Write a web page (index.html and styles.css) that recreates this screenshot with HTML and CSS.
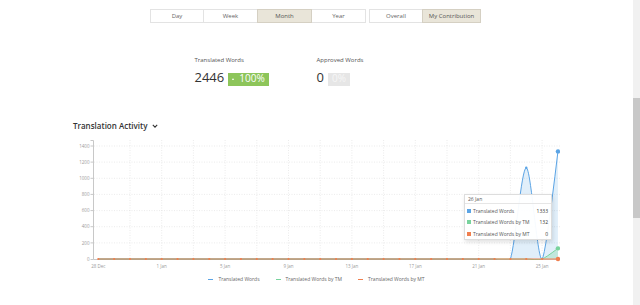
FILE: index.html
```html
<!DOCTYPE html>
<html lang="en">
<head>
    <meta charset="UTF-8">
    <meta name="viewport" content="width=device-width, initial-scale=1.0">
    <title>Translation Activity</title>
    <link rel="stylesheet" href="styles.css">
</head>
<body>
<div class="page">
    <main class="content">
        <div class="tabs">
            <div class="seg">
                <button class="tab">Day</button>
                <button class="tab">Week</button>
                <button class="tab active">Month</button>
                <button class="tab">Year</button>
            </div>
            <div class="seg">
                <button class="tab">Overall</button>
                <button class="tab wide active">My Contribution</button>
            </div>
        </div>

        <div class="stats">
            <div class="stat">
                <div class="stat-label">Translated Words</div>
                <div class="stat-row">
                    <span class="stat-num">2446</span>
                    <span class="badge badge-up"><span class="arrow"></span>100%</span>
                </div>
            </div>
            <div class="stat">
                <div class="stat-label">Approved Words</div>
                <div class="stat-row">
                    <span class="stat-num">0</span>
                    <span class="badge badge-none">0%</span>
                </div>
            </div>
        </div>

        <section class="activity">
            <h2 class="activity-title">Translation Activity
                <svg class="chevron" width="6" height="4" viewBox="0 0 6 4"><polyline points="0.8,0.8 3,3.1 5.2,0.8"/></svg>
            </h2>

            <div class="chart">
                <svg class="plot" width="487" height="135" viewBox="73 138 487 135">
                    <defs>
                        <clipPath id="plot-area"><rect x="93" y="138" width="470" height="122"/></clipPath>
                    </defs>

                    <!-- grid -->
                    <path class="grid" d="M94 242.9H560M94 226.7H560M94 210.6H560M94 194.4H560M94 178.3H560M94 162.1H560M94 146H560"/>
                    <path class="grid" d="M130 140V259M161.7 140V259M193.4 140V259M225.1 140V259M256.8 140V259M288.5 140V259M320.2 140V259M351.9 140V259M383.6 140V259M415.3 140V259M447 140V259M478.7 140V259M510.4 140V259M542.1 140V259"/>

                    <!-- axes -->
                    <path class="axis" d="M90.5 140.5H93.5V259.5H560.5V262M90.5 259.5H93.5M90.5 146H93.5M90.5 162.1H93.5M90.5 178.3H93.5M90.5 194.4H93.5M90.5 210.6H93.5M90.5 226.7H93.5M90.5 242.9H93.5"/>
                    <g class="ticks ylab">
                        <text x="89.5" y="260.6">0</text>
                        <text x="89.5" y="244.5">200</text>
                        <text x="89.5" y="228.3">400</text>
                        <text x="89.5" y="212.2">600</text>
                        <text x="89.5" y="196">800</text>
                        <text x="89.5" y="179.9">1000</text>
                        <text x="89.5" y="163.7">1200</text>
                        <text x="89.5" y="147.6">1400</text>
                    </g>
                    <g class="ticks xlab">
                        <text x="98.3" y="267.8">28 Dec</text>
                        <text x="161.7" y="267.8">1 Jan</text>
                        <text x="225.1" y="267.8">5 Jan</text>
                        <text x="288.5" y="267.8">9 Jan</text>
                        <text x="351.9" y="267.8">13 Jan</text>
                        <text x="415.3" y="267.8">17 Jan</text>
                        <text x="478.7" y="267.8">21 Jan</text>
                        <text x="542.1" y="267.8">25 Jan</text>
                    </g>

                    <!-- series -->
                    <g clip-path="url(#plot-area)">
                        <path class="area tw" d="M98.3,259 L494.55,259 C499.3,259 505.65,272.7 510.4,259 C515.15,245.3 521.55,167.8 526.25,167.8 C531.05,167.8 537.35,261.5 542.1,259 Q545.27,257.36 557.95,151.4 L557.95,259 Z"/>
                        <path class="area tm" d="M98.3,259 L526.25,259 C531.05,259 537.35,260.6 542.1,259 Q545.27,257.93 557.95,248.35 L557.95,259 Z"/>
                        <path class="line tw" d="M98.3,259 L494.55,259 C499.3,259 505.65,272.7 510.4,259 C515.15,245.3 521.55,167.8 526.25,167.8 C531.05,167.8 537.35,261.5 542.1,259 Q545.27,257.36 557.95,151.4"/>
                        <path class="line tm" d="M98.3,259 L526.25,259 C531.05,259 537.35,260.6 542.1,259 Q545.27,257.93 557.95,248.35"/>
                        <path class="line mt" d="M98.3,259 H557.95"/>
                    </g>

                    <!-- points -->
                    <circle class="dot tw" cx="526.25" cy="167.8" r="1.2"/>
                    <line class="dots mt" x1="98.3" y1="259" x2="542.2" y2="259"/>
                    <circle class="dot tw" cx="557.95" cy="151.4" r="2.2"/>
                    <circle class="dot tm" cx="557.95" cy="248.35" r="2.2"/>
                    <circle class="dot mt" cx="557.95" cy="259" r="2.2"/>
                </svg>

                <div class="tooltip">
                    <div class="tip-head">26 Jan</div>
                    <div class="tip-rows">
                        <div class="tip-row"><span class="swatch tw"></span>Translated Words<span class="tip-val">1333</span></div>
                        <div class="tip-row"><span class="swatch tm"></span>Translated Words by TM<span class="tip-val">132</span></div>
                        <div class="tip-row"><span class="swatch mt"></span>Translated Words by MT<span class="tip-val">0</span></div>
                    </div>
                </div>
            </div>

            <ul class="legend">
                <li><span class="legend-line tw"></span>Translated Words</li>
                <li><span class="legend-line tm"></span>Translated Words by TM</li>
                <li><span class="legend-line mt"></span>Translated Words by MT</li>
            </ul>
        </section>
    </main>

    <div class="scrollbar"><div class="thumb"></div></div>
</div>
</body>
</html>
```

FILE: styles.css
```css
body {
    font-family: "Open Sans", "Liberation Sans", sans-serif;
    margin: 0;
    padding: 0;
    background-color: #fff;
    color: #333;
    overflow: hidden;
}

.page {
    display: flex;
    height: 305px;
}

.content {
    flex: 1;
    min-width: 0;
}

/* period / scope switches */
.tabs {
    display: flex;
    justify-content: center;
    gap: 3px;
    padding: 9px 2px 0 0;
}

.seg {
    display: flex;
}

.tab {
    width: 54px;
    height: 14px;
    padding: 0;
    box-sizing: border-box;
    border: 1px solid #e3e3e3;
    background-color: #fff;
    color: #666;
    font-family: "Open Sans", sans-serif;
    font-size: 6px;
    line-height: 12px;
}

.tab + .tab {
    border-left: none;
}

.tab.wide {
    width: 58px;
}

.tab.active {
    background-color: #e9e5d9;
    border-color: #d5d0c3;
    box-shadow: -1px 0 0 #d5d0c3;
    color: #555;
}

/* totals */
.stats {
    display: flex;
    justify-content: center;
    margin-top: 33px;
}

.stat {
    width: 122px;
}

.stat-label {
    font-size: 6px;
    line-height: 8px;
    color: #555;
    margin-bottom: 5px;
}

.stat-row {
    display: flex;
    align-items: baseline;
    gap: 4px;
}

.stat-num {
    font-size: 13px;
    line-height: 17px;
    color: #333;
}

.badge {
    font-size: 10px;
    line-height: 10px;
    padding: 0 4px 3px;
    color: #fff;
}

.badge-up {
    background-color: #8dc55a;
}

.badge-none {
    background-color: #e6e6e6;
    color: #f6f6f6;
}

.arrow {
    display: inline-block;
    vertical-align: 2px;
    margin-right: 5px;
    border-left: 1.5px solid transparent;
    border-right: 1.5px solid transparent;
    border-bottom: 2px solid #fff;
}

/* activity chart */
.activity {
    width: 487px;
    margin: 34px auto 0;
}

.activity-title {
    display: flex;
    align-items: center;
    gap: 4px;
    margin: 0;
    font-size: 8px;
    line-height: 11px;
    font-weight: 600;
    color: #333;
}

.chevron polyline {
    fill: none;
    stroke: #333;
    stroke-width: 1.1;
}

.chart {
    position: relative;
    height: 135px;
    margin-top: 7px;
}

.plot {
    display: block;
}

.grid {
    fill: none;
    stroke: #dedede;
    stroke-width: 0.6;
    stroke-dasharray: 1 1.5;
}

.axis {
    fill: none;
    stroke: #c8c8c8;
    stroke-width: 1;
}

.ticks text {
    font-family: "Open Sans", sans-serif;
    font-size: 4.5px;
    fill: #9a9a9a;
}

.ylab {
    text-anchor: end;
}

.xlab {
    text-anchor: middle;
}

.area.tw {
    fill: rgba(91, 164, 229, 0.18);
}

.area.tm {
    fill: rgba(120, 211, 157, 0.3);
}

.line {
    fill: none;
    stroke-width: 1;
}

.line.tw { stroke: #5ba4e5; }
.line.tm { stroke: #78d39d; }
.line.mt { stroke: #f07f4f; }

.dot.tw { fill: #5ba4e5; }
.dot.tm { fill: #78d39d; }
.dot.mt { fill: #f07f4f; }

.dots {
    stroke: #f07f4f;
    stroke-width: 2.2;
    stroke-linecap: round;
    stroke-dasharray: 0 15.85;
}

.tooltip {
    position: absolute;
    left: 391px;
    top: 56px;
    width: 88px;
    height: 46px;
    box-sizing: border-box;
    background-color: rgba(255, 255, 255, 0.95);
    border: 1px solid #ddd;
    box-shadow: 1px 2px 4px rgba(0, 0, 0, 0.12);
    font-size: 5px;
    color: #555;
}

.tip-head {
    height: 8px;
    line-height: 8px;
    padding: 0 3px;
    border-bottom: 1px solid #e6e6e6;
}

.tip-rows {
    padding-top: 1px;
}

.tip-row {
    display: flex;
    align-items: center;
    height: 11.5px;
    padding: 0 3px 0 2px;
}

.swatch {
    width: 4px;
    height: 4px;
    margin-right: 2px;
}

.swatch.tw { background-color: #5ba4e5; }
.swatch.tm { background-color: #78d39d; }
.swatch.mt { background-color: #f07f4f; }

.tip-val {
    margin-left: auto;
    color: #333;
}

.legend {
    display: flex;
    justify-content: center;
    gap: 16px;
    margin: 2px 0 0;
    padding: 0;
    list-style: none;
    font-size: 5px;
    line-height: 8px;
    color: #666;
}

.legend li {
    display: flex;
    align-items: center;
}

.legend-line {
    width: 5px;
    height: 1px;
    margin-right: 5px;
}

.legend-line.tw { background-color: #5ba4e5; }
.legend-line.tm { background-color: #78d39d; }
.legend-line.mt { background-color: #f07f4f; }

/* fake window scrollbar */
.scrollbar {
    width: 7px;
    padding-top: 98px;
    box-sizing: border-box;
    background-color: #f1f1f1;
}

.thumb {
    height: 120px;
    background-color: #c8c8c8;
}
```
